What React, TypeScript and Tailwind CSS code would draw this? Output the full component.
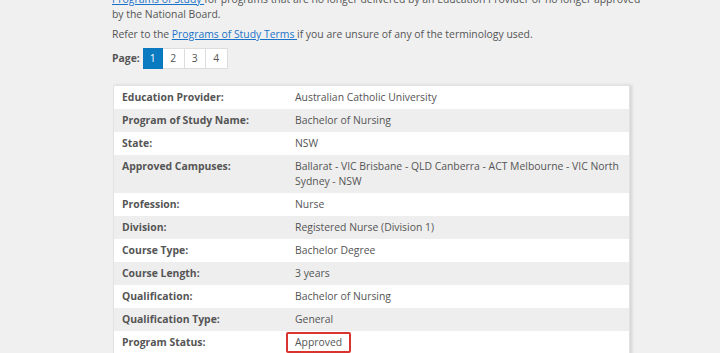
import React from "react";

const rows: [string, string][] = [
  ["Education Provider:", "Australian Catholic University"],
  ["Program of Study Name:", "Bachelor of Nursing"],
  ["State:", "NSW"],
  ["Approved Campuses:", "Ballarat - VIC Brisbane - QLD Canberra - ACT Melbourne - VIC North Sydney - NSW"],
  ["Profession:", "Nurse"],
  ["Division:", "Registered Nurse (Division 1)"],
  ["Course Type:", "Bachelor Degree"],
  ["Course Length:", "3 years"],
  ["Qualification:", "Bachelor of Nursing"],
  ["Qualification Type:", "General"],
  ["Program Status:", "Approved"],
];

export default function App() {
  return (
    <div
      className="h-[353px] w-[720px] overflow-hidden bg-[#f0f0f0] text-[10.4px] text-[#555]"
      style={{ fontFamily: '"Open Sans", "Noto Sans", sans-serif' }}
    >
      <div className="ml-[112px] w-[540px]">
        <p className="-mt-[8px] w-[540px] leading-[15px]">
          <a className="text-[#1a73c8] underline">Programs of Study </a>for programs that are no longer delivered by an Education Provider or no longer approved by the National Board.
        </p>
        <p className="mt-[5px] leading-[15px]">
          Refer to the <a className="text-[#1a73c8] underline">Programs of Study Terms </a>if you are unsure of any of the terminology used.
        </p>
        <div className="mt-[6px] flex items-center">
          <span className="mr-[3px] font-bold">Page:</span>
          <div className="flex">
            <span className="flex h-[21px] w-[20px] items-center justify-center border border-[#0a78bf] bg-[#0a7bc1] text-white">1</span>
            <span className="flex h-[21px] w-[22px] items-center justify-center border border-l-0 border-[#ddd] bg-white">2</span>
            <span className="flex h-[21px] w-[21px] items-center justify-center border border-l-0 border-[#ddd] bg-white">3</span>
            <span className="flex h-[21px] w-[22px] items-center justify-center border border-l-0 border-[#ddd] bg-white">4</span>
          </div>
        </div>
        <div className="mt-[16px] ml-[1px] w-[517px] border border-[#e2e2e2] bg-white shadow-[2px_0_3px_rgba(0,0,0,0.12)]">
          {rows.map(([k, v], i) => (
            <div
              key={k}
              className={`flex py-[4px] leading-[15px] ${i % 2 === 1 ? "bg-[#eeeeee]" : "bg-white"}`}
            >
              <div className="w-[181px] shrink-0 pl-[8px] font-bold">{k}</div>
              <div className="flex-1 pr-[4px]">
                {k === "Program Status:" ? (
                  <span className="-my-[3px] -ml-[9px] inline-block rounded-[2px] border-2 border-[#d9342f] px-[7px] py-[1px]">{v}</span>
                ) : (
                  v
                )}
              </div>
            </div>
          ))}
        </div>
      </div>
    </div>
  );
}
